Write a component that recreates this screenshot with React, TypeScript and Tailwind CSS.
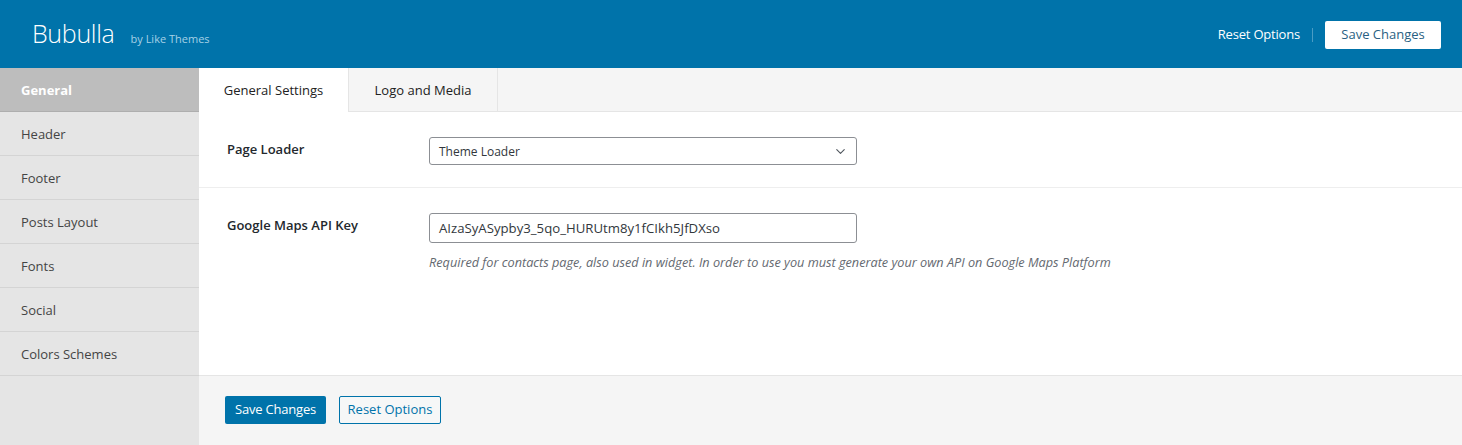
import { ChevronDown } from 'lucide-react';

const menu = ['General', 'Header', 'Footer', 'Posts Layout', 'Fonts', 'Social', 'Colors Schemes'];

export default function App() {
  return (
    <div className="w-[1462px] h-[445px] bg-white text-[13px] text-[#444] font-['Open_Sans',sans-serif] flex flex-col overflow-hidden">
      {/* top bar */}
      <div className="h-[68px] shrink-0 bg-[#0073aa] flex items-center justify-between pl-[32px] pr-[21px]">
        <div className="flex items-baseline">
          <span className="text-[25px] font-light text-white tracking-[-0.3px]">Bubulla</span>
          <span className="ml-[16px] text-[11px] text-[#a6d1e6]">by Like Themes</span>
        </div>
        <div className="flex items-center pt-[1px]">
          <span className="text-white text-[13px] tracking-[-0.2px]">Reset Options</span>
          <span className="mx-[12px] h-[14px] w-px bg-[#4a9cc4]" />
          <button className="h-[28px] w-[116px] bg-white rounded-[2px] text-[13px] text-[#2a5f82]">Save Changes</button>
        </div>
      </div>

      <div className="flex flex-1 min-h-0">
        {/* sidebar */}
        <div className="w-[199px] shrink-0 bg-[#e5e5e5] flex flex-col">
          {menu.map((m, i) =>
            i === 0 ? (
              <div key={m} className="h-[44px] bg-[#bdbdbd] flex items-center pl-[21px] pt-[2px] font-bold text-white border-b border-[#aeaeae]">
                {m}
              </div>
            ) : (
              <div key={m} className="h-[44px] flex items-center pl-[21px] pt-[2px] text-[#444] border-b border-[#d4d4d4]">
                {m}
              </div>
            )
          )}
        </div>

        {/* main */}
        <div className="flex-1 flex flex-col min-w-0">
          <div className="h-[44px] shrink-0 bg-[#f5f5f5] border-b border-[#e5e5e5] flex">
            <div className="w-[149px] h-[44px] pt-[2px] bg-white flex items-center justify-center text-[#222] text-[13px]">General Settings</div>
            <div className="w-[150px] h-[43px] pt-[2px] border-r border-l border-[#e5e5e5] flex items-center justify-center text-[#222] text-[13px]">Logo and Media</div>
          </div>

          <div className="h-[76px] shrink-0 border-b border-[#eeeeee] flex pl-[28px] pt-[25px]">
            <div className="w-[202px] pt-[3px] font-semibold text-[#23282d]">Page Loader</div>
            <div className="w-[428px] h-[28px] border border-[#8c8f94] rounded-[3px] flex items-center justify-between pl-[9px] pr-[8px] text-[12px] text-[#32373c]">
              <span className="pt-[2px]">Theme Loader</span>
              <ChevronDown size={15} strokeWidth={1.8} className="text-[#50575e]" />
            </div>
          </div>

          <div className="flex-1 flex pl-[28px] pt-[25px]">
            <div className="w-[202px] pt-[3px] font-semibold text-[#23282d]">Google Maps API Key</div>
            <div className="flex flex-col">
              <div className="w-[428px] h-[30px] border border-[#8c8f94] rounded-[3px] flex items-center pl-[9px] pt-[1px] text-[13.2px] text-[#32373c]">
                AIzaSyASypby3_5qo_HURUtm8y1fCIkh5JfDXso
              </div>
              <div className="mt-[10px] text-[12.7px] italic text-[#646970]">
                Required for contacts page, also used in widget. In order to use you must generate your own API on Google Maps Platform
              </div>
            </div>
          </div>

          <div className="h-[70px] shrink-0 bg-[#f5f5f5] border-t border-[#e5e5e5] flex items-center pl-[26px] gap-[13px] pb-[1px]">
            <button className="h-[28px] w-[101px] bg-[#0073aa] text-white rounded-[2px] text-[13px] tracking-[-0.2px]">Save Changes</button>
            <button className="h-[28px] w-[102px] border border-[#0073aa] text-[#0073aa] bg-[#f6f7f7] rounded-[2px] text-[13px]">Reset Options</button>
          </div>
        </div>
      </div>
    </div>
  );
}
